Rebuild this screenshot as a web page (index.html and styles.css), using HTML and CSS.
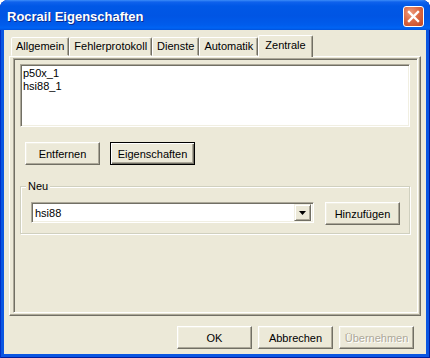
FILE: index.html
```html
<!DOCTYPE html>
<html>
<head>
  <meta charset="utf-8" />
  <title>Rocrail Eigenschaften</title>
  <link rel="stylesheet" href="styles.css">
</head>
<body>

<div class="window">
  <div class="titlebar">
    <span class="title">Rocrail Eigenschaften</span>
    <span class="close">
      <svg width="19" height="19" viewBox="0 0 19 19">
        <path d="M5 5 L14 14 M14 5 L5 14" stroke="#fff" stroke-width="2.4" stroke-linecap="square"/>
      </svg>
    </span>
  </div>

  <div class="client">
    <div class="tabs">
      <div class="tab">Allgemein</div>
      <div class="tab">Fehlerprotokoll</div>
      <div class="tab">Dienste</div>
      <div class="tab">Automatik</div>
      <div class="tab active">Zentrale</div>
    </div>

    <div class="panel">
      <div class="page">
        <div class="listbox">
          <div>p50x_1</div>
          <div>hsi88_1</div>
        </div>

        <div class="btn-row">
          <span class="btn">Entfernen</span>
          <span class="btn default wide">Eigenschaften</span>
        </div>

        <fieldset class="group">
          <legend>Neu</legend>
          <div class="combo">
            <span class="combo-text">hsi88</span>
            <span class="combo-drop">
              <svg width="7" height="4" viewBox="0 0 7 4"><path d="M0 0 H7 L3.5 4 Z" fill="#000"/></svg>
            </span>
          </div>
          <span class="btn">Hinzufügen</span>
        </fieldset>
      </div>
    </div>

    <div class="footer">
      <span class="btn">OK</span>
      <span class="btn">Abbrechen</span>
      <span class="btn disabled">Übernehmen</span>
    </div>
  </div>
</div>

</body>
</html>
```

FILE: styles.css
```css
*{margin:0;padding:0;box-sizing:border-box;}
body{
	background:#fff;
	font-family:"Liberation Sans", Arial, sans-serif;
	font-size:11px;
	color:#000;
}
.window{
	width:430px;
	height:358px;
	display:flex;
	flex-direction:column;
	background:#0A56E2;
	border-radius:8px 8px 0 0;
	box-shadow:inset 1px 0 0 #0030C8, inset -1px 0 0 #001C9C, inset 0 -1px 0 #001C9C;
	overflow:hidden;
}

/* title bar */
.titlebar{
	height:30px;
	display:flex;
	align-items:flex-start;
	justify-content:space-between;
	padding:0 6px 0 7px;
	background:linear-gradient(#3C8CF8 0, #0F62EC 2px, #0058E6 6px, #0055E4 16px, #005CEC 25px, #0064F4 28px, #0052DC 30px);
}
.title{
	margin-top:9px;
	color:#fff;
	font-weight:bold;
	font-size:13px;
	line-height:16px;
	text-shadow:1px 1px 0 #0A2A8C;
}
.close{
	margin-top:6px;
	width:21px;
	height:21px;
	display:flex;
	align-items:center;
	justify-content:center;
	border:1px solid #fff;
	border-radius:3px;
	background:radial-gradient(circle at 35% 30%, #EE9C7E 0, #DC6A45 45%, #C24522 100%);
}

/* client area */
.client{
	flex:1;
	margin:0 4px 4px;
	background:#ECE9D8;
	display:flex;
	flex-direction:column;
	padding:5px 5px 0;
}
.tabs{
	height:21px;
	display:flex;
	align-items:flex-end;
	padding-left:2px;
	position:relative;
	z-index:1;
}
.tab{
	height:19px;
	line-height:17px;
	padding:0 4px;
	border:1px solid;
	border-color:#fff #716F64 transparent #fff;
	border-radius:2px 2px 0 0;
	box-shadow:inset -1px 0 0 #ACA899;
	white-space:nowrap;
	background:#ECE9D8;
}
.tab.active{
	height:22px;
	line-height:19px;
	margin:0 0 -1px 0;
	padding:0 6px 0 6px;
	border-bottom:none;
}
.panel{
	height:260px;
	border:1px solid;
	border-color:#fff #716F64 #716F64 #fff;
	box-shadow:inset -1px -1px 0 #ACA899;
	padding:1px 2px 2px 3px;
}
.page{
	height:100%;
	border:1px solid;
	border-color:#ACA899 #fff #fff #ACA899;
	box-shadow:inset 1px 1px 0 #716F64;
	padding:5px 6px 0 6px;
	display:flex;
	flex-direction:column;
}
.listbox{
	width:390px;
	height:63px;
	background:#fff;
	border:1px solid;
	border-color:#ACA899 #fff #fff #ACA899;
	box-shadow:inset 1px 1px 0 #716F64, inset -1px -1px 0 #F1EFE2;
	padding:2px 2px;
	line-height:13px;
}

/* buttons */
.btn{
	display:inline-flex;
	align-items:center;
	justify-content:center;
	width:75px;
	height:23px;
	background:#ECE9D8;
	border:1px solid;
	border-color:#fff #716F64 #716F64 #fff;
	box-shadow:inset -1px -1px 0 #ACA899, inset 1px 1px 0 #F1EFE2;
	white-space:nowrap;
}
.btn.wide{
	width:85px;
}
.btn.default{
	border:1px solid #000;
	box-shadow:inset 1px 1px 0 #fff, inset -1px -1px 0 #716F64, inset -2px -2px 0 #ACA899;
}
.btn.disabled{
	color:#ACA899;
	text-shadow:1px 1px 0 #fff;
}
.btn-row{
	display:flex;
	gap:10px;
	margin:15px 0 0 5px;
}

/* group box */
.group{
	width:390px;
	margin-top:15px;
	border:1px solid #D0D0BF;
	box-shadow:inset 1px 1px 0 #fff, 1px 1px 0 #fff;
	padding:9px 9px 8px 10px;
	display:flex;
	align-items:flex-start;
	gap:11px;
}
.group legend{
	margin-left:-5px;
	padding:0 2px;
	line-height:13px;
	background:#ECE9D8;
}
.combo{
	width:283px;
	height:21px;
	display:flex;
	align-items:center;
	justify-content:space-between;
	background:#fff;
	border:1px solid;
	border-color:#ACA899 #fff #fff #ACA899;
	box-shadow:inset 1px 1px 0 #716F64, inset -1px -1px 0 #F1EFE2;
	padding:2px 2px 2px 3px;
}
.combo-drop{
	width:17px;
	height:17px;
	display:flex;
	align-items:center;
	justify-content:center;
	background:#ECE9D8;
	border:1px solid;
	border-color:#F1EFE2 #716F64 #716F64 #F1EFE2;
	box-shadow:inset 1px 1px 0 #fff, inset -1px -1px 0 #ACA899;
}

/* footer */
.footer{
	height:38px;
	display:flex;
	justify-content:flex-end;
	align-items:flex-start;
	gap:6px;
	padding:10px 7px 0 0;
}
```
